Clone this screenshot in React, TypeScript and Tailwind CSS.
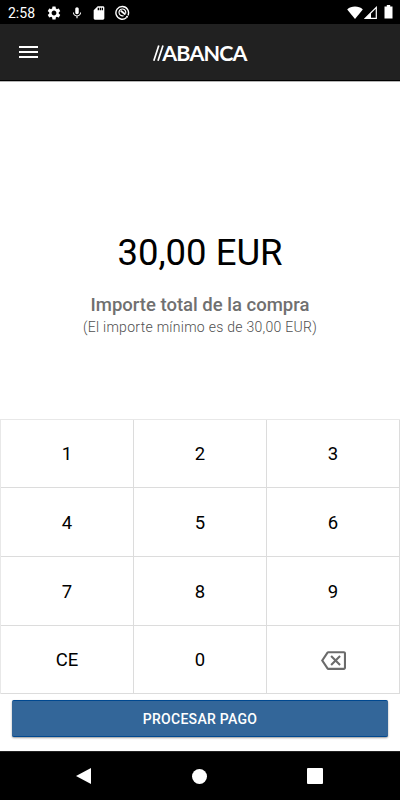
import { MdMic, MdOutlineBackspace, MdSdCard, MdSettings } from 'react-icons/md';

const keys = ['1', '2', '3', '4', '5', '6', '7', '8', '9', 'CE', '0', 'back'];

const StatusBar: React.FC = () => (
  <div className="flex h-6 shrink-0 items-center bg-black pl-2 pr-[7px] text-white">
    <span className="w-[27px] text-sm leading-6 pt-[2px]">2:58</span>
    <MdSettings className="ml-[11px] mt-px h-4 w-4" />
    <MdMic className="ml-[8px] mt-px h-[14px] w-[14px]" />
    <MdSdCard className="ml-[7px] mt-px h-4 w-4" />
    <svg className="ml-[8px] mt-px h-[15px] w-[15px]" viewBox="0 0 15 15" fill="none" stroke="currentColor">
      <path d="M11.5 12.5A6.300 6.300 0 1 1 13 10.400" strokeWidth="1.400" />
      <path d="M8.500 10.600A3.400 3.400 0 1 1 10.600 8.500" strokeWidth="1.200" />
      <path d="M5.800 5.800L10.400 9.400" strokeWidth="1.900" />
      <circle cx="12" cy="11.800" r="1" fill="currentColor" stroke="none" />
    </svg>
    <svg className="ml-auto h-[13px] w-4" viewBox="0 0 16 13" fill="currentColor">
      <path d="M8 13L.2 3.4C2.300 1.600 5 .6 8 .6s5.700 1 7.800 2.800z" />
    </svg>
    <svg className="ml-px h-[13px] w-[13px]" viewBox="0 0 13 13">
      <path d="M12.300 1.400V12.300H1.400z" fill="none" stroke="white" strokeWidth="1.200" />
      <path d="M7 6.500V12.500H1z" fill="white" />
    </svg>
    <svg className="ml-[7px] h-[14px] w-[9px]" viewBox="0 0 9 14" fill="currentColor">
      <path d="M2.800 0h3.400v1.400H8.500V13.500H.5V1.400h2.300z" />
    </svg>
  </div>
);

const Header: React.FC = () => (
  <header className="grid h-[57px] shrink-0 grid-cols-3 items-center border-b border-black bg-[#212121] px-[19px] text-white shadow-[0_1px_0_#b5b5b5]">
    <button className="flex w-[19px] flex-col gap-[3px]">
      <span className="h-[2px] w-full bg-white" />
      <span className="h-[2px] w-full bg-white" />
      <span className="h-[2px] w-full bg-white" />
    </button>
    <div className="flex items-center justify-center pt-[2px]">
      <svg className="h-4 w-[11px] shrink-0" viewBox="0 0 11 16" stroke="white" strokeWidth="1.700">
        <path d="M.8 15.800L5.800 .4M5 15.800L10 .4" />
      </svg>
      <span className="-ml-[2px] font-['Lato'] text-[21.500px] font-bold leading-6 tracking-[-0.850px]">ABANCA</span>
    </div>
  </header>
);

const Keypad: React.FC = () => (
  <div className="grid h-[275px] shrink-0 grid-cols-[133px_133px_133px] grid-rows-[68px_69px_69px_68px] border-l border-t border-[#e8e8e8]">
    {keys.map((key) => (
      <button
        key={key}
        className="flex items-center justify-center border-b border-r border-[#dcdcdc] text-[18.500px] font-[450] text-black"
      >
        {key === 'back' ? (
          <MdOutlineBackspace className="mt-px h-[25px] w-[25px] text-[#6b6b6b]" />
        ) : (
          <span className="pt-[3px]">{key}</span>
        )}
      </button>
    ))}
  </div>
);

const App: React.FC = () => {
  return (
    <div className="flex h-[800px] w-[400px] flex-col overflow-hidden bg-white font-['Roboto',sans-serif]">
      <StatusBar />
      <Header />
      <main className="flex flex-1 flex-col items-center pt-[148px]">
        <h1 className="text-[36.500px] leading-[48px] text-black">30,00 EUR</h1>
        <p className="mt-4 text-[18.500px] font-medium leading-6 text-[#707070]">Importe total de la compra</p>
        <p className="text-sm font-light leading-5 tracking-[0.280px] text-[#4f4f4f]">(El importe mínimo es de 30,00 EUR)</p>
      </main>
      <Keypad />
      <div className="h-[57px] shrink-0 px-3 pt-[6px]">
        <button className="h-[37px] w-full rounded-[2px] border-y border-[#004890] bg-[#336699] pt-px text-sm font-medium tracking-[0.300px] text-white shadow-[0_1px_2px_rgba(0,0,0,0.4)]">
          PROCESAR PAGO
        </button>
      </div>
      <nav className="flex h-[49px] shrink-0 items-center justify-between border-t border-[#222] bg-black pl-[76px] pr-[77px]">
        <svg className="h-[18px] w-[15px]" viewBox="0 0 15 18" fill="white">
          <path d="M15 1v16L0 9z" />
        </svg>
        <span className="ml-px h-[15px] w-[15px] rounded-full bg-white" />
        <span className="h-4 w-4 rounded-[1px] bg-white" />
      </nav>
    </div>
  );
};

export default App;
